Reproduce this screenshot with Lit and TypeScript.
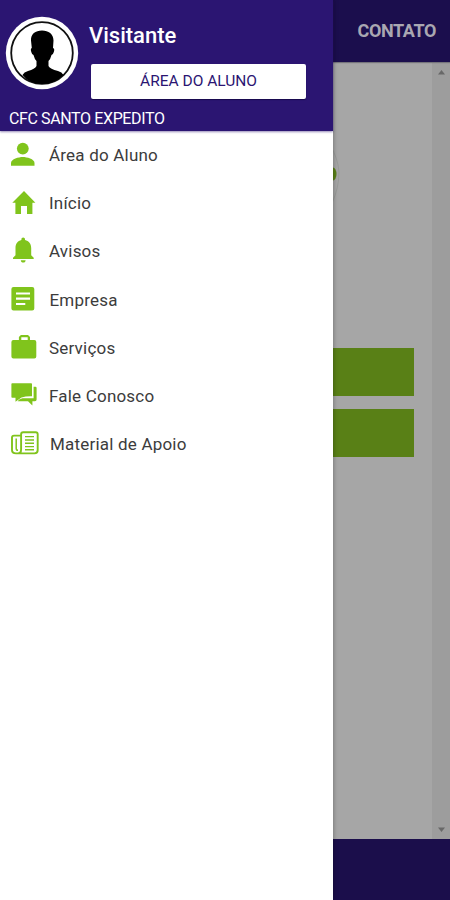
import { LitElement, html, css, svg } from "lit";
import { customElement } from "lit/decorators.js";

const person = svg`
  <circle cx="22.8" cy="17.6" r="5.9"/>
  <path d="M11 34.7V32C11 28 18.8 26 22.8 26S34.5 28 34.5 32V34.7Z"/>`;
const home = svg`
  <path d="M24 12L35.4 23.8H32.4V35H27V27H21V35H15.4V23.8H12.3Z"/>`;
const bell = svg`
  <path d="M23.2 10.6c1 0 1.8.8 1.8 1.8v.7c3.8.8 6.2 3.9 6.2 7.8v7.3l2.5 2.5v1.4H13v-1.4l2.5-2.5v-7.3c0-3.9 2.2-7 5.9-7.8v-.7c0-1 .8-1.8 1.8-1.8Z"/>
  <path d="M20.8 33.3h4.8c0 1.4-1 2.3-2.4 2.3s-2.4-.9-2.4-2.3Z"/>`;
const article = svg`
  <path fill-rule="evenodd" d="M13.5 11.9H32.2a2.1 2.1 0 0 1 2.1 2.1V33.4a2.1 2.1 0 0 1-2.1 2.1H13.5a2.1 2.1 0 0 1-2.1-2.1V14a2.1 2.1 0 0 1 2.1-2.1ZM16 17.4V19.6H30V17.4ZM16 22.6V24.8H30V22.6ZM16 27.9V30.1H25.3V27.9Z"/>`;
const briefcase = svg`
  <path fill-rule="evenodd" d="M18.9 17V14L20.9 12H28L30 14V17H34.3A2 2 0 0 1 36.3 19V33.5A2 2 0 0 1 34.3 35.5H13.4A2 2 0 0 1 11.4 33.5V19A2 2 0 0 1 13.4 17ZM21.3 17H27.7V14.3H21.3Z"/>`;
const chat = svg`
  <path d="M12.2 12.2H31.2Q32 12.2 32 13V25.2Q26 25 21.5 26.5L15.5 30.8V26.7H12.2Q11.4 26.7 11.4 25.9V13Q11.4 12.2 12.2 12.2Z"/>
  <path d="M33.6 15.8H35.4Q36.6 15.8 36.6 17V28.5Q36.6 30.3 35 30.3H32.4V34.5L28 30.3H17.6Q18.5 28.2 22.5 27.3H33.6Z"/>`;
const newspaper = svg`
  <g fill="none" stroke="#80c41c" stroke-width="1.9" stroke-linejoin="round">
    <path d="M20.5 16.6H14Q12 16.6 12 18.6V31Q12 34.4 16 34.4H34.5Q37.7 34.4 37.7 31V15.3Q37.7 13.2 35.7 13.2H23.2Q21.1 13.2 21.1 15.3V30.5Q21.1 34.4 17.8 34.4"/>
    <path stroke-width="1.5" d="M16.2 19.5V29.5Q16.2 31.3 18 31.3"/>
    <path stroke-width="1.4" d="M25 17.6H34M25 21H34M25 24.3H34M25 27.6H34M25 30.8H34"/>
  </g>`;

const entries = [
  { label: "Área do Aluno", icon: person, cls: "aluno" },
  { label: "Início", icon: home, cls: "inicio" },
  { label: "Avisos", icon: bell, cls: "avisos" },
  { label: "Empresa", icon: article, cls: "empresa" },
  { label: "Serviços", icon: briefcase, cls: "servicos" },
  { label: "Fale Conosco", icon: chat, cls: "fale" },
  { label: "Material de Apoio", icon: newspaper, cls: "material" },
];

@customElement("app-page")
class AppPage extends LitElement {
  static styles = css`
    :host { display: flex; flex-direction: column; height: 100%; background: #a6a6a6; }
    .bar { flex: none; height: 62px; box-sizing: border-box; background: #1b0e4d; display: flex; align-items: center;
      justify-content: flex-end; padding-right: 14px; box-shadow: 0 1px 1px #75747b; z-index: 1; }
    .tab { color: #a9a7b1; font-size: 18px; font-weight: 700; line-height: 22px; white-space: nowrap; letter-spacing: -.4px; }
    .body { flex: 1; display: flex; min-height: 0; }
    .content { flex: 1; display: flex; flex-direction: column; padding: 286px 18px 0 36px; gap: 13px; position: relative; }
    .block { height: 48px; flex: none; background: #598016; }
    .logo { position: absolute; left: 310px; top: 73px; width: 32px; height: 76px; }
    .scroll { width: 18px; background: #9d9d9d; display: flex; flex-direction: column; align-items: center;
      justify-content: space-between; padding: 8px 0 7px; box-sizing: border-box; }
    .scroll svg { width: 7px; height: 5px; fill: #686868; display: block; }
    .foot { flex: none; height: 61px; background: #1b0e4b; }
  `;
  render() {
    return html`
      <div class="bar"><span class="tab">CONTATO</span></div>
      <div class="body">
        <div class="content">
          <svg class="logo" viewBox="0 0 32 76">
            <path d="M20 10Q28 23 29 37Q29 53 22 68" fill="none" stroke="#999b99" stroke-width="1"/>
            <ellipse cx="23" cy="39" rx="3.5" ry="6.5" fill="#598016"/>
          </svg>
          <div class="block"></div>
          <div class="block"></div>
        </div>
        <div class="scroll">
          <svg viewBox="0 0 7 5"><path d="M0 4.5L3.5 0L7 4.5Z"/></svg>
          <svg viewBox="0 0 7 5"><path d="M0 .5L3.5 5L7 .5Z"/></svg>
        </div>
      </div>
      <div class="foot"></div>
    `;
  }
}

@customElement("app-drawer")
class AppDrawer extends LitElement {
  static styles = css`
    :host { display: flex; flex-direction: column; background: #fff; box-shadow: 0 0 5px rgba(0, 0, 0, .35); }
    .head { height: 131px; flex: none; box-sizing: border-box; background: #2b1572; color: #fff; display: flex;
      flex-direction: column; box-shadow: 0 1px 2px rgba(43, 21, 114, .5); }
    .profile { display: flex; height: 108px; padding: 16px 27px 0 5px; box-sizing: border-box; gap: 12px; }
    .avatar { width: 74px; height: 74px; flex: none; }
    .info { flex: 1; display: flex; flex-direction: column; padding-top: 8px; }
    .name { font-size: 22px; font-weight: 500; line-height: 24px; margin-left: -2px; }
    .login { margin-top: 16px; height: 35px; border: 0; border-radius: 2px; background: #fff; color: #2b1572;
      font: 400 15.5px/33px Roboto, sans-serif; padding: 0; box-shadow: 0 1px 1px rgba(10, 0, 50, .6); }
    .school { font-size: 16px; line-height: 22px; padding-left: 9px; white-space: nowrap; letter-spacing: -.38px; }
    .item { display: flex; height: 48px; align-items: center; color: #3c3c3c; }
    .icon { width: 42px; height: 48px; flex: none; fill: #80c41c; }
    .label { font-size: 17px; line-height: 24px; margin-left: 7px; white-space: nowrap; letter-spacing: .2px; }
    .empresa .label { margin-left: 7.5px; }
    .material .label { margin-left: 8px; }
    .empresa .label, .servicos .label, .fale .label, .material .label { padding-top: 1px; }
  `;
  render() {
    return html`
      <div class="head">
        <div class="profile">
          <svg class="avatar" viewBox="0 0 74 74">
            <circle cx="37" cy="37" r="36.2" fill="#fff"/>
            <circle cx="37" cy="37" r="30.8" fill="#fff" stroke="#111" stroke-width="1.8"/>
            <path fill="#000" d="M37 14.5C43.5 14.5 48.5 18 48.5 24.5L48 32Q50 32.5 48.8 36Q48 39 46.5 39Q45.5 43 43.5 45V50Q45 53 53 55Q57 56 58.5 59Q49.5 68 37 68Q24.5 68 17.5 59Q19 56 23 55Q30 53 31.5 50V45Q29.5 43 28.5 39Q27 39 26.3 36Q25.2 32.5 26.8 32L26 24.5C25.5 18 30.5 14.5 37 14.5Z"/>
          </svg>
          <div class="info">
            <span class="name">Visitante</span>
            <button class="login">ÁREA DO ALUNO</button>
          </div>
        </div>
        <div class="school">CFC SANTO EXPEDITO</div>
      </div>
      <nav>
        ${entries.map(
          (e) => html`<div class="item ${e.cls}">
            <svg class="icon" viewBox="0 0 42 48">${e.icon}</svg><span class="label">${e.label}</span>
          </div>`
        )}
      </nav>
    `;
  }
}

@customElement("app-root")
class AppRoot extends LitElement {
  static styles = css`
    :host { display: block; position: relative; width: 450px; height: 900px; overflow: hidden;
      font-family: Roboto, sans-serif; }
    .drawer { position: absolute; inset: 0 auto 0 0; width: 333px; z-index: 2; }
  `;
  render() {
    return html`<app-page></app-page><app-drawer class="drawer"></app-drawer>`;
  }
}
